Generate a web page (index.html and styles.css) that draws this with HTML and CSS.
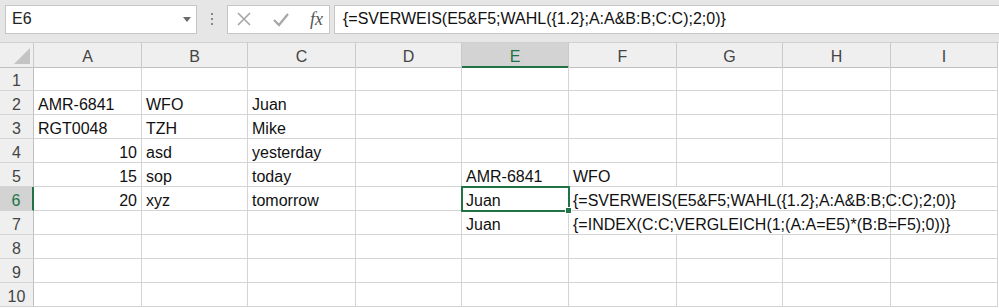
FILE: index.html
```html
<!DOCTYPE html>
<html lang="de">
<head>
    <meta charset="UTF-8">
    <title>Mappe1 - Excel</title>
    <link rel="stylesheet" href="styles.css">
</head>
<body>
    <div class="topbar">
        <div class="namebox">
            <span>E6</span>
            <svg class="drop" width="8" height="5" viewBox="0 0 8 5"><path d="M0 0H8L4 5Z" fill="#6a6a6a"/></svg>
        </div>
        <div class="grip"><i></i><i></i><i></i></div>
        <div class="fxbox">
            <svg width="16" height="16" viewBox="0 0 16 16"><path d="M2 2L14 14M14 2L2 14" stroke="#a6a6a6" stroke-width="1.6" fill="none"/></svg>
            <svg width="18" height="16" viewBox="0 0 18 16"><path d="M2 9L7 14L16 3" stroke="#a6a6a6" stroke-width="2.2" fill="none"/></svg>
            <span class="fx">fx</span>
        </div>
        <div class="formula">{=SVERWEIS(E5&amp;F5;WAHL({1.2};A:A&amp;B:B;C:C);2;0)}</div>
    </div>

    <div class="sheet">
        <div class="row head">
            <div class="corner"></div>
            <div>A</div><div>B</div><div>C</div><div>D</div>
            <div class="sel">E</div>
            <div>F</div><div>G</div><div>H</div><div>I</div>
        </div>
        <div class="row">
            <div class="rh">1</div>
            <div></div><div></div><div></div><div></div><div></div><div></div><div></div><div></div><div></div>
        </div>
        <div class="row">
            <div class="rh">2</div>
            <div>AMR-6841</div><div>WFO</div><div>Juan</div><div></div><div></div><div></div><div></div><div></div><div></div>
        </div>
        <div class="row">
            <div class="rh">3</div>
            <div>RGT0048</div><div>TZH</div><div>Mike</div><div></div><div></div><div></div><div></div><div></div><div></div>
        </div>
        <div class="row">
            <div class="rh">4</div>
            <div class="num">10</div><div>asd</div><div>yesterday</div><div></div><div></div><div></div><div></div><div></div><div></div>
        </div>
        <div class="row">
            <div class="rh">5</div>
            <div class="num">15</div><div>sop</div><div>today</div><div></div><div>AMR-6841</div><div>WFO</div><div></div><div></div><div></div>
        </div>
        <div class="row">
            <div class="rh sel">6</div>
            <div class="num">20</div><div>xyz</div><div>tomorrow</div><div></div>
            <div class="active">Juan</div>
            <div class="wide">{=SVERWEIS(E5&amp;F5;WAHL({1.2};A:A&amp;B:B;C:C);2;0)}</div>
            <div></div>
        </div>
        <div class="row">
            <div class="rh">7</div>
            <div></div><div></div><div></div><div></div><div>Juan</div>
            <div class="wide">{=INDEX(C:C;VERGLEICH(1;(A:A=E5)*(B:B=F5);0))}</div>
            <div></div>
        </div>
        <div class="row">
            <div class="rh">8</div>
            <div></div><div></div><div></div><div></div><div></div><div></div><div></div><div></div><div></div>
        </div>
        <div class="row">
            <div class="rh">9</div>
            <div></div><div></div><div></div><div></div><div></div><div></div><div></div><div></div><div></div>
        </div>
        <div class="row">
            <div class="rh">10</div>
            <div></div><div></div><div></div><div></div><div></div><div></div><div></div><div></div><div></div>
        </div>
    </div>
</body>
</html>
```
FILE: styles.css
```css
body {
    margin: 0;
    background-color: #fff;
    font-family: "Liberation Sans", Arial, sans-serif;
    color: #111;
    overflow: hidden;
}

.topbar {
    display: flex;
    align-items: center;
    height: 43px;
    padding: 0 0 0 5px;
    background-color: #e6e6e6;
    border-bottom: 1px solid #d0d0d0;
    box-sizing: border-box;
}

.namebox {
    width: 192px;
    height: 29px;
    margin-top: -4px;
    background-color: #fff;
    border: 1px solid #c6c6c6;
    box-sizing: border-box;
    display: flex;
    align-items: center;
    justify-content: space-between;
    padding: 0 5px 0 6px;
    font-size: 16px;
    color: #222;
}

.grip {
    width: 30px;
    display: flex;
    flex-direction: column;
    align-items: center;
    gap: 3px;
    margin-top: -4px;
}

.grip i {
    width: 2px;
    height: 2px;
    background-color: #888;
}

.fxbox {
    width: 103px;
    height: 29px;
    margin-top: -4px;
    background-color: #fff;
    border: 1px solid #c6c6c6;
    box-sizing: border-box;
    display: flex;
    align-items: center;
    justify-content: space-between;
    padding: 0 6px 0 8px;
}

.fx {
    font-family: "Liberation Serif", serif;
    font-style: italic;
    font-size: 18px;
    color: #555;
}

.formula {
    flex: 1;
    height: 29px;
    margin: -4px 0 0 4px;
    background-color: #fff;
    border: 1px solid #c6c6c6;
    border-right: none;
    box-sizing: border-box;
    padding: 4px 0 0 8px;
    font-size: 16px;
    color: #111;
}

.row {
    display: grid;
    grid-template-columns: 34px 108px 106px 108px 106px 107px 108px 106px 108px 107px;
    height: 24px;
}

.row > div {
    border-right: 1px solid #d4d4d4;
    border-bottom: 1px solid #d4d4d4;
    box-sizing: border-box;
    font-size: 16px;
    padding: 5px 0 0 4px;
    white-space: nowrap;
}

.row .num {
    text-align: right;
    padding: 5px 4px 0 0;
}

.row .wide {
    grid-column: span 3;
}

.head > div {
    background-color: #efefef;
    border-right: 1px solid #c9c9c9;
    border-bottom: 1px solid #c0c0c0;
    text-align: center;
    padding: 5px 0 0;
    color: #444;
}

.head .corner {
    position: relative;
}

.head .corner::after {
    content: "";
    position: absolute;
    right: 3px;
    bottom: 3px;
    border-style: solid;
    border-width: 0 0 16px 16px;
    border-color: transparent transparent #c4c4c4 transparent;
}

.head .sel {
    background-color: #d3d3d3;
    color: #217346;
    border-bottom: 2px solid #217346;
}

.row .rh {
    background-color: #efefef;
    border-right: 1px solid #c0c0c0;
    border-bottom: 1px solid #d4d4d4;
    text-align: center;
    padding: 5px 0 0;
    color: #444;
}

.row .rh.sel {
    background-color: #d3d3d3;
    color: #217346;
    border-right: 2px solid #217346;
}

.row .active {
    position: relative;
    outline: 2px solid #217346;
    outline-offset: -1px;
    z-index: 1;
}

.row .active::after {
    content: "";
    position: absolute;
    right: -4px;
    bottom: -4px;
    width: 5px;
    height: 5px;
    background-color: #217346;
    border: 1px solid #fff;
}
```
